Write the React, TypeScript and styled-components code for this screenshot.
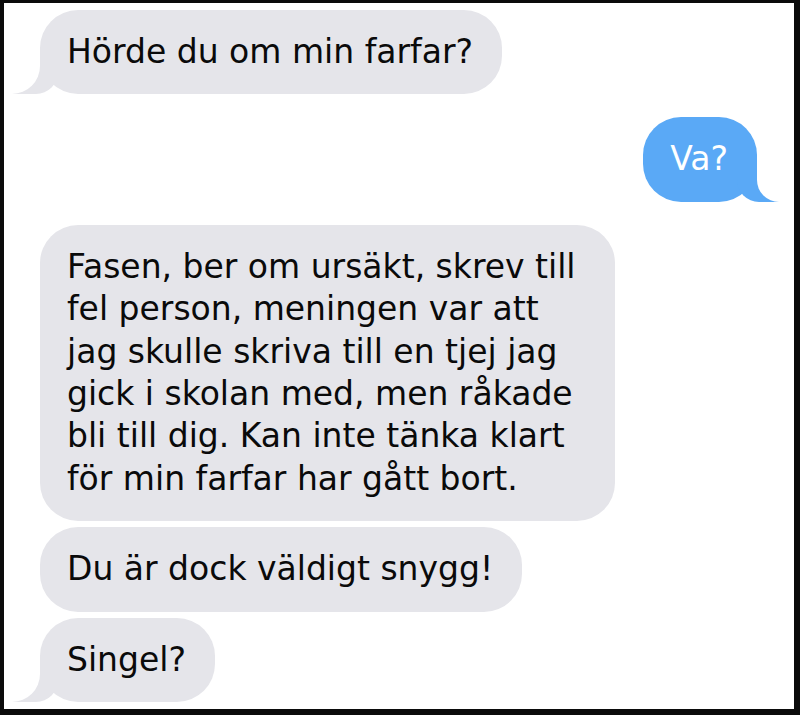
import React from 'react';
import styled, { createGlobalStyle, css } from 'styled-components';

const GlobalStyle = createGlobalStyle`
  html, body {
    margin: 0;
    padding: 0;
    background: #ffffff;
  }
`;

const Frame = styled.div`
  box-sizing: border-box;
  width: 800px;
  height: 715px;
  border-style: solid;
  border-color: #0b0b0b;
  border-width: 3px 6px 6px 4px;
  background: #ffffff;
  overflow: hidden;
`;

const Thread = styled.div`
  display: flex;
  flex-direction: column;
  gap: 23px;
  padding: 7px 37px 0 36px;
`;

const Group = styled.div<{ $mine?: boolean }>`
  display: flex;
  flex-direction: column;
  align-items: ${props => (props.$mine ? 'flex-end' : 'flex-start')};
  gap: 6px;
`;

const grayTail = css`
  &:before {
    content: '';
    position: absolute;
    bottom: 0;
    left: -28px;
    width: 46px;
    height: 40px;
    background: #e5e5ea;
    border-bottom-right-radius: 22px;
  }
  &:after {
    content: '';
    position: absolute;
    bottom: 0;
    left: -40px;
    width: 40px;
    height: 42px;
    background: #ffffff;
    border-bottom-right-radius: 28px;
  }
`;

const blueTail = css`
  &:before {
    content: '';
    position: absolute;
    bottom: 0;
    right: -22px;
    width: 42px;
    height: 38px;
    background: #5aa9f6;
    border-bottom-left-radius: 22px;
  }
  &:after {
    content: '';
    position: absolute;
    bottom: 0;
    right: -40px;
    width: 40px;
    height: 40px;
    background: #ffffff;
    border-bottom-left-radius: 22px;
  }
`;

const Bubble = styled.div<{ $mine?: boolean; $tail?: boolean }>`
  position: relative;
  box-sizing: border-box;
  max-width: 575px;
  padding: 21px 29px 21px 27px;
  border-radius: 38px;
  font-family: 'DejaVu Sans', Verdana, sans-serif;
  font-size: 33px;
  line-height: 42.4px;
  color: ${props => (props.$mine ? '#ffffff' : '#0a0a0a')};
  background: ${props => (props.$mine ? '#5aa9f6' : '#e5e5ea')};
  z-index: 0;

  &:before,
  &:after {
    z-index: -1;
  }

  ${props => props.$tail && (props.$mine ? blueTail : grayTail)}
`;

const Text = styled.span`
  position: relative;
  z-index: 1;
`;

const App: React.FC = () => {
    return (
        <>
            <GlobalStyle />
            <Frame>
                <Thread>
                    <Group>
                        <Bubble $tail>
                            <Text>Hörde du om min farfar?</Text>
                        </Bubble>
                    </Group>
                    <Group $mine>
                        <Bubble $mine $tail>
                            <Text>Va?</Text>
                        </Bubble>
                    </Group>
                    <Group>
                        <Bubble>
                            <Text>
                                Fasen, ber om ursäkt, skrev till fel person, meningen var att jag skulle
                                skriva till en tjej jag gick i skolan med, men råkade bli till dig. Kan
                                inte tänka klart för min farfar har gått bort.
                            </Text>
                        </Bubble>
                        <Bubble>
                            <Text>Du är dock väldigt snygg!</Text>
                        </Bubble>
                        <Bubble $tail>
                            <Text>Singel?</Text>
                        </Bubble>
                    </Group>
                </Thread>
            </Frame>
        </>
    );
};

export default App;
